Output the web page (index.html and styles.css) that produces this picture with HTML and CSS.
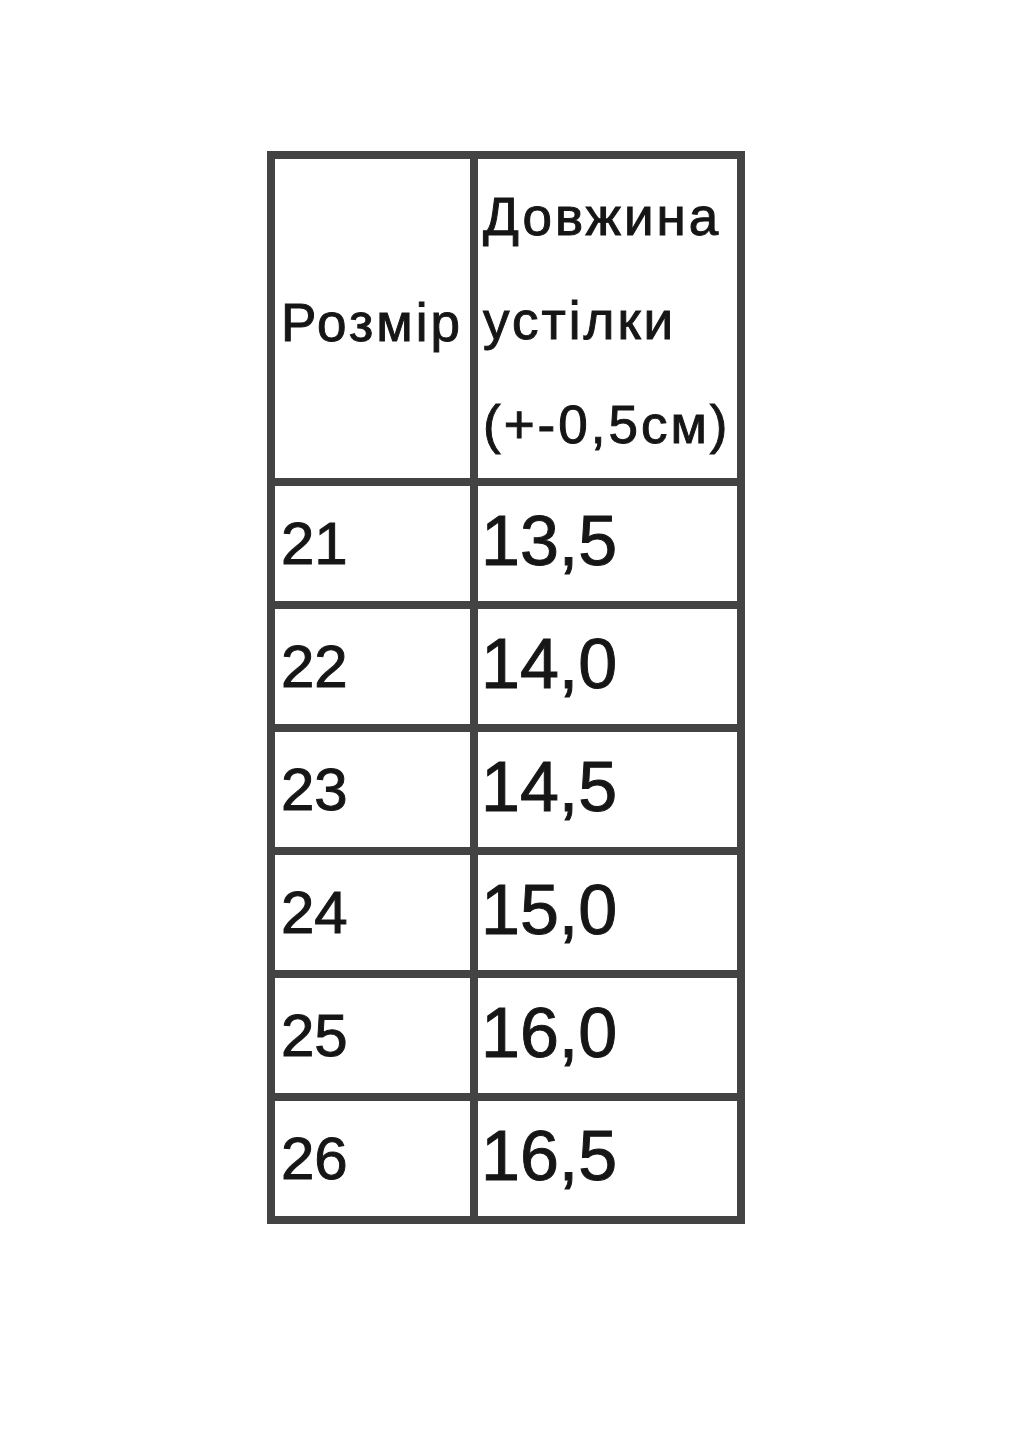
FILE: index.html
```html
<!DOCTYPE html>
<html lang="uk">
<head>
<meta charset="utf-8">
<title>Розмірна сітка</title>
<link rel="stylesheet" href="styles.css">
</head>
<body>
<div class="page">
  <div class="size-table">
    <div class="cell head head-size">Розмір</div>
    <div class="cell head head-len">Довжина<br>устілки<br>(+-0,5см)</div>
    <div class="cell size">21</div><div class="cell len">13,5</div>
    <div class="cell size">22</div><div class="cell len">14,0</div>
    <div class="cell size">23</div><div class="cell len">14,5</div>
    <div class="cell size">24</div><div class="cell len">15,0</div>
    <div class="cell size">25</div><div class="cell len">16,0</div>
    <div class="cell size">26</div><div class="cell len">16,5</div>
  </div>
</div>
</body>
</html>
```
FILE: styles.css
```css
html, body {
  margin: 0;
  padding: 0;
  background: #ffffff;
}
.page {
  width: 1035px;
  height: 1440px;
  padding: 151px 0 0 267px;
  box-sizing: border-box;
}
.size-table {
  display: grid;
  grid-template-columns: 195px 259px;
  grid-template-rows: 319px repeat(6, 115px);
  gap: 8px;
  padding: 8px;
  width: 478px;
  box-sizing: border-box;
  background: #434343;
  font-family: "Liberation Sans", Arial, sans-serif;
  color: #161616;
  -webkit-text-stroke: 1px #161616;
}
.cell {
  background: #ffffff;
  box-sizing: border-box;
  white-space: nowrap;
  overflow: visible;
}
.head {
  font-size: 53px;
  line-height: 104px;
  letter-spacing: 3px;
}
.head-size {
  padding: 112px 0 0 6px;
}
.head-len {
  padding: 6px 0 0 5px;
}
.size {
  font-size: 60px;
  line-height: 60px;
  padding: 28px 0 0 6px;
}
.len {
  font-size: 70px;
  line-height: 70px;
  padding: 20px 0 0 3px;
}
```
